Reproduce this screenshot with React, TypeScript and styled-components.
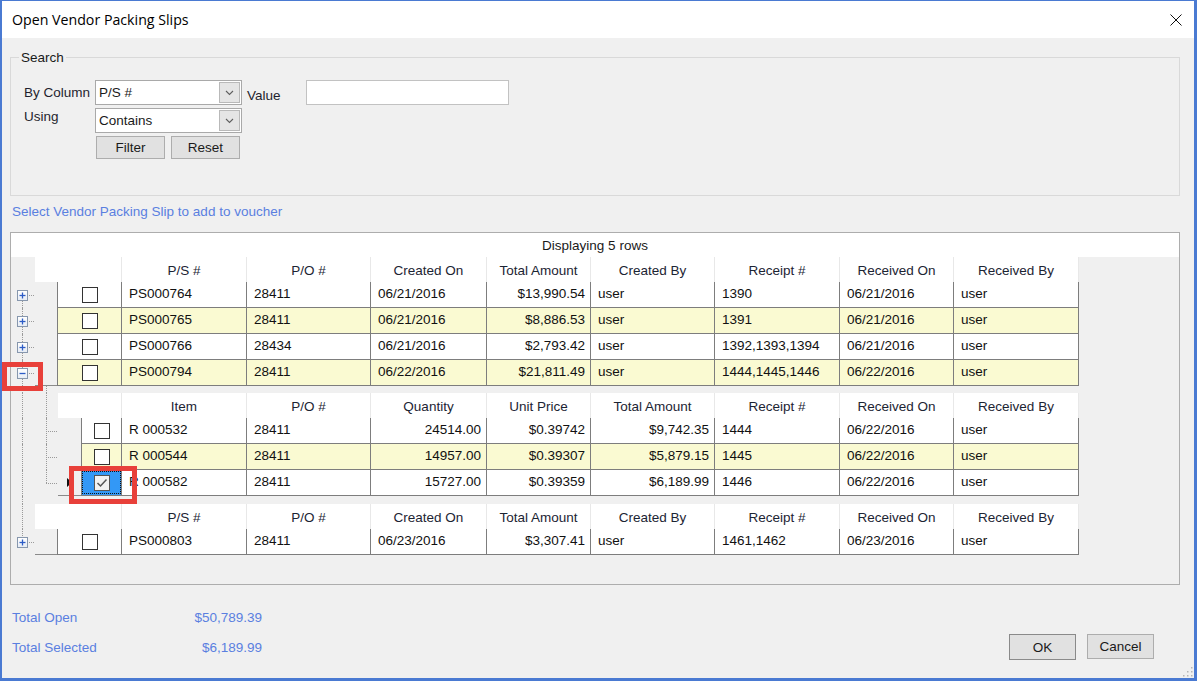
import React from 'react';
import styled, { createGlobalStyle } from 'styled-components';

const GlobalStyle = createGlobalStyle`
  html, body {
    margin: 0;
    padding: 0;
    background: #fff;
  }
  body {
    font-family: "Liberation Sans", Arial, sans-serif;
    font-size: 13.5px;
    color: #1a1a1a;
  }
  * {
    box-sizing: border-box;
  }
`;

const Window = styled.div`
  position: relative;
  width: 1197px;
  height: 681px;
  border-style: solid;
  border-color: #4a7ad2;
  border-width: 1px 3px 3px 2px;
  background: #f0f0f0;
  display: flex;
  flex-direction: column;
`;

const TitleBar = styled.div`
  height: 37px;
  flex-shrink: 0;
  background: #fff;
  display: flex;
  align-items: center;
  justify-content: space-between;
  padding: 0 12px 0 10px;
`;

const Title = styled.span`
  font-family: "Open Sans", "Noto Sans", sans-serif;
  font-size: 14.2px;
  color: #000;
`;

const Body = styled.div`
  display: flex;
  flex-direction: column;
  padding: 12px 0 0 8px;
  flex: 1;
`;

const SearchGroup = styled.fieldset`
  width: 1170px;
  margin: 0;
  min-width: 0;
  padding: 15px 0 36px 13px;
  border: 1px solid #d9d9d9;
`;

const Legend = styled.legend`
  padding: 0 2px;
  margin-left: -5px;
  line-height: 15px;
  color: #1a1a1a;
`;

const SearchForm = styled.div`
  display: grid;
  grid-template-columns: 71px 147px 64px 203px;
  row-gap: 3px;
  align-items: center;
`;

const FieldLabel = styled.span<{ $top?: boolean }>`
  line-height: 15px;
  color: #1f1f2e;
  white-space: nowrap;
  align-self: ${({ $top }) => ($top ? 'start' : 'center')};
  margin-top: ${({ $top }) => ($top ? '1px' : '0')};
`;

const ValueLabel = styled(FieldLabel)`
  padding-left: 5px;
  margin-top: 5px;
`;

const Combo = styled.div`
  height: 25px;
  background: #fff;
  border: 1px solid #a9a9a9;
  display: flex;
  align-items: center;
  justify-content: space-between;
  padding: 0 1px 0 3px;
`;

const ComboArrow = styled.span`
  width: 21px;
  height: 21px;
  background: #e5e5e5;
  border: 1px solid #b9b9b9;
  display: flex;
  align-items: center;
  justify-content: center;
`;

const TextBox = styled.div`
  height: 25px;
  background: #fff;
  border: 1px solid #c2c2c2;
`;

const ButtonRow = styled.div`
  grid-column: 2 / span 3;
  display: flex;
  gap: 6px;
  padding-left: 1px;
`;

const Button = styled.button<{ $w: number; $h: number; $default?: boolean }>`
  width: ${({ $w }) => $w}px;
  height: ${({ $h }) => $h}px;
  background: #e1e1e1;
  border: 1px solid ${({ $default }) => ($default ? '#8a8a8a' : '#adadad')};
  font-family: "Liberation Sans", Arial, sans-serif;
  font-size: 13.5px;
  color: #1a1a1a;
  padding: 0;
`;

const Hint = styled.div`
  line-height: 15px;
  margin: 8px 0 13px 2px;
  color: #5a7fe0;
`;

const Grid = styled.div`
  width: 1170px;
  height: 353px;
  border: 1px solid #adadad;
  background: #f0f0f0;
  display: flex;
  flex-direction: column;
`;

const Caption = styled.div`
  height: 24px;
  flex-shrink: 0;
  background: #fff;
  display: flex;
  align-items: center;
  justify-content: center;
`;

const Line = styled.div<{ $h: number }>`
  display: flex;
  height: ${({ $h }) => $h}px;
  flex-shrink: 0;
`;

type Span = 'none' | 'full' | 'lower' | 'upper';

const TreeCell = styled.div<{ $w: number; $span: Span; $branch?: boolean }>`
  position: relative;
  width: ${({ $w }) => $w}px;
  flex-shrink: 0;
  display: flex;
  align-items: center;
  padding-left: 6px;

  &::before {
    content: '';
    display: ${({ $span }) => ($span === 'none' ? 'none' : 'block')};
    position: absolute;
    left: 11px;
    top: ${({ $span }) => ($span === 'lower' ? '50%' : '0')};
    bottom: ${({ $span }) => ($span === 'upper' ? '50%' : '0')};
    border-left: 1px dotted #9a9a9a;
  }

  &::after {
    content: '';
    display: ${({ $branch }) => ($branch ? 'block' : 'none')};
    position: absolute;
    left: 11px;
    right: 1px;
    top: 50%;
    border-top: 1px dotted #9a9a9a;
  }
`;

const Toggle = styled.span`
  position: relative;
  z-index: 1;
  width: 11px;
  height: 11px;
  border: 1px solid #8797ad;
  background: linear-gradient(#ffffff, #e6ecf5);
  display: flex;
  align-items: center;
  justify-content: center;
`;

const RowSelector = styled.div<{ $w: number; $last?: boolean }>`
  width: ${({ $w }) => $w}px;
  flex-shrink: 0;
  display: flex;
  align-items: center;
  justify-content: center;
  border-bottom: 1px solid ${({ $last }) => ($last ? '#8a8a8a' : 'transparent')};
`;

const HeaderRow = styled.div`
  display: flex;
  background: #fff;
`;

const HeaderSpacer = styled.div<{ $w: number }>`
  width: ${({ $w }) => $w}px;
  flex-shrink: 0;
`;

const HeaderCell = styled.div<{ $w: number }>`
  width: ${({ $w }) => $w}px;
  flex-shrink: 0;
  border-right: 1px solid #e8e8e8;
  display: flex;
  align-items: center;
  justify-content: center;
  padding-top: 1px;
  color: #1c2433;
  white-space: nowrap;
`;

const Cells = styled.div<{ $alt: boolean }>`
  display: flex;
  background: ${({ $alt }) => ($alt ? '#fafad2' : '#fff')};
  border-bottom: 1px solid #7d7d7d;
`;

const Cell = styled.div<{ $w: number; $right?: boolean }>`
  width: ${({ $w }) => $w}px;
  flex-shrink: 0;
  border-right: 1px solid #7d7d7d;
  display: flex;
  align-items: center;
  justify-content: ${({ $right }) => ($right ? 'flex-end' : 'flex-start')};
  padding: 0 5px 3px 7px;
  white-space: nowrap;
  overflow: hidden;
  color: #111;
`;

const CheckCell = styled.div<{ $w: number; $selected?: boolean }>`
  width: ${({ $w }) => $w}px;
  flex-shrink: 0;
  border-left: 1px solid #7d7d7d;
  border-right: 1px solid #7d7d7d;
  display: flex;
  align-items: center;
  justify-content: center;
  background: ${({ $selected }) => ($selected ? '#3398f6' : 'transparent')};
  outline: ${({ $selected }) => ($selected ? '1px dotted #111' : 'none')};
  outline-offset: -2px;
`;

const CheckBox = styled.span<{ $checked?: boolean }>`
  width: 16px;
  height: 16px;
  border: 1px solid ${({ $checked }) => ($checked ? '#555' : '#333')};
  background: ${({ $checked }) => ($checked ? '#f2f2f2' : '#fff')};
  display: flex;
  align-items: center;
  justify-content: center;
`;

const Filler = styled.div`
  flex: 1;
`;

const Footer = styled.div`
  flex: 1;
  display: flex;
  align-items: flex-start;
  justify-content: space-between;
  padding: 18px 40px 0 10px;
`;

const Totals = styled.div`
  display: grid;
  grid-template-columns: 150px 100px;
  color: #5a7fe0;
  line-height: 30px;
`;

const Amount = styled.span`
  justify-self: end;
`;

const Actions = styled.div`
  display: flex;
  gap: 11px;
  margin-top: 31px;
`;

const Highlight = styled.div<{ $x: number; $y: number; $w: number; $h: number }>`
  position: absolute;
  left: ${({ $x }) => $x}px;
  top: ${({ $y }) => $y}px;
  width: ${({ $w }) => $w}px;
  height: ${({ $h }) => $h}px;
  border: 5px solid #e8403a;
  pointer-events: none;
`;

const Grip = styled.svg`
  position: absolute;
  right: 1px;
  bottom: 1px;
`;

type Col = { title: string; width: number; right?: boolean };

const parentCols: Col[] = [
  { title: 'P/S #', width: 125 },
  { title: 'P/O #', width: 124 },
  { title: 'Created On', width: 116 },
  { title: 'Total Amount', width: 104, right: true },
  { title: 'Created By', width: 124 },
  { title: 'Receipt #', width: 125 },
  { title: 'Received On', width: 114 },
  { title: 'Received By', width: 125 },
];

const childCols: Col[] = [
  { title: 'Item', width: 125 },
  { title: 'P/O #', width: 124 },
  { title: 'Quantity', width: 116, right: true },
  { title: 'Unit Price', width: 104, right: true },
  { title: 'Total Amount', width: 124, right: true },
  { title: 'Receipt #', width: 125 },
  { title: 'Received On', width: 114 },
  { title: 'Received By', width: 125 },
];

const parentRows = [
  ['PS000764', '28411', '06/21/2016', '$13,990.54', 'user', '1390', '06/21/2016', 'user'],
  ['PS000765', '28411', '06/21/2016', '$8,886.53', 'user', '1391', '06/21/2016', 'user'],
  ['PS000766', '28434', '06/21/2016', '$2,793.42', 'user', '1392,1393,1394', '06/21/2016', 'user'],
  ['PS000794', '28411', '06/22/2016', '$21,811.49', 'user', '1444,1445,1446', '06/22/2016', 'user'],
];

const childRows = [
  ['R 000532', '28411', '24514.00', '$0.39742', '$9,742.35', '1444', '06/22/2016', 'user'],
  ['R 000544', '28411', '14957.00', '$0.39307', '$5,879.15', '1445', '06/22/2016', 'user'],
  ['R 000582', '28411', '15727.00', '$0.39359', '$6,189.99', '1446', '06/22/2016', 'user'],
];

const lastRow = ['PS000803', '28411', '06/23/2016', '$3,307.41', 'user', '1461,1462', '06/23/2016', 'user'];

const Chevron = () => (
  <svg width="9" height="6" viewBox="0 0 9 6">
    <path d="M1 1 L4.5 4.5 L8 1" fill="none" stroke="#5f5f5f" strokeWidth="1.1" />
  </svg>
);

const ToggleIcon = ({ open }: { open: boolean }) => (
  <Toggle>
    <svg width="9" height="9" viewBox="0 0 9 9">
      <path d="M1.5 4.5 H7.5" stroke="#2d5cc6" strokeWidth="1.3" />
      {!open && <path d="M4.5 1.5 V7.5" stroke="#2d5cc6" strokeWidth="1.3" />}
    </svg>
  </Toggle>
);

const CheckMark = () => (
  <svg width="12" height="10" viewBox="0 0 12 10">
    <path d="M1.5 5 L4.5 8 L10.5 1.5" fill="none" stroke="#555" strokeWidth="1.5" />
  </svg>
);

const Arrow = () => (
  <svg width="5" height="9" viewBox="0 0 5 9">
    <path d="M0 0 L5 4.5 L0 9 Z" fill="#111" />
  </svg>
);

const Header: React.FC<{ cols: Col[]; selW: number; checkW: number }> = ({ cols, selW, checkW }) => (
  <HeaderRow>
    <HeaderSpacer $w={selW} />
    <HeaderCell $w={checkW} />
    {cols.map((c) => (
      <HeaderCell key={c.title} $w={c.width}>
        {c.title}
      </HeaderCell>
    ))}
  </HeaderRow>
);

const DataCells: React.FC<{
  cols: Col[];
  values: string[];
  alt: boolean;
  checkW: number;
  checked?: boolean;
}> = ({ cols, values, alt, checkW, checked }) => (
  <Cells $alt={alt}>
    <CheckCell $w={checkW} $selected={checked}>
      <CheckBox $checked={checked}>{checked && <CheckMark />}</CheckBox>
    </CheckCell>
    {cols.map((c, i) => (
      <Cell key={c.title} $w={c.width} $right={c.right}>
        {values[i]}
      </Cell>
    ))}
  </Cells>
);

export default function App() {
  return (
    <>
      <GlobalStyle />
      <Window>
        <TitleBar>
          <Title>Open Vendor Packing Slips</Title>
          <svg width="12" height="12" viewBox="0 0 12 12">
            <path d="M0.5 0.5 L11.5 11.5 M11.5 0.5 L0.5 11.5" stroke="#111" strokeWidth="1" />
          </svg>
        </TitleBar>

        <Body>
          <SearchGroup>
            <Legend>Search</Legend>
            <SearchForm>
              <FieldLabel>By Column</FieldLabel>
              <Combo>
                P/S #
                <ComboArrow>
                  <Chevron />
                </ComboArrow>
              </Combo>
              <ValueLabel>Value</ValueLabel>
              <TextBox />

              <FieldLabel $top>Using</FieldLabel>
              <Combo>
                Contains
                <ComboArrow>
                  <Chevron />
                </ComboArrow>
              </Combo>
              <span />
              <span />

              <span />
              <ButtonRow>
                <Button $w={69} $h={23}>Filter</Button>
                <Button $w={69} $h={23}>Reset</Button>
              </ButtonRow>
            </SearchForm>
          </SearchGroup>

          <Hint>Select Vendor Packing Slip to add to voucher</Hint>

          <Grid>
            <Caption>Displaying 5 rows</Caption>

            <Line $h={25}>
              <TreeCell $w={24} $span="none" />
              <Header cols={parentCols} selW={22} checkW={65} />
            </Line>
            {parentRows.map((r, i) => (
              <Line key={r[0]} $h={26}>
                <TreeCell $w={24} $span={i === 0 ? 'lower' : 'full'} $branch>
                  <ToggleIcon open={i === 3} />
                </TreeCell>
                <RowSelector $w={22} $last={i === 3} />
                <DataCells cols={parentCols} values={r} alt={i % 2 === 1} checkW={65} />
              </Line>
            ))}

            <Line $h={7}>
              <TreeCell $w={24} $span="full" />
              <TreeCell $w={23} $span="full" />
            </Line>
            <Line $h={25}>
              <TreeCell $w={24} $span="full" />
              <TreeCell $w={23} $span="full" />
              <Header cols={childCols} selW={23} checkW={41} />
            </Line>
            {childRows.map((r, i) => (
              <Line key={r[0]} $h={26}>
                <TreeCell $w={24} $span="full" />
                <TreeCell $w={23} $span={i === 2 ? 'upper' : 'full'} $branch />
                <RowSelector $w={23} $last={i === 2}>
                  {i === 2 && <Arrow />}
                </RowSelector>
                <DataCells cols={childCols} values={r} alt={i === 1} checkW={41} checked={i === 2} />
              </Line>
            ))}

            <Line $h={8}>
              <TreeCell $w={24} $span="full" />
            </Line>
            <Line $h={25}>
              <TreeCell $w={24} $span="full" />
              <Header cols={parentCols} selW={22} checkW={65} />
            </Line>
            <Line $h={26}>
              <TreeCell $w={24} $span="upper" $branch>
                <ToggleIcon open={false} />
              </TreeCell>
              <RowSelector $w={22} $last />
              <DataCells cols={parentCols} values={lastRow} alt={false} checkW={65} />
            </Line>
            <Filler />
          </Grid>
        </Body>

        <Footer>
          <Totals>
            <span>Total Open</span>
            <Amount>$50,789.39</Amount>
            <span>Total Selected</span>
            <Amount>$6,189.99</Amount>
          </Totals>
          <Actions>
            <Button $w={67} $h={26} $default>OK</Button>
            <Button $w={67} $h={25}>Cancel</Button>
          </Actions>
        </Footer>

        <Highlight $x={0} $y={361} $w={41} $h={29} />
        <Highlight $x={67} $y={465} $w={68} $h={38} />

        <Grip width="11" height="11" viewBox="0 0 11 11">
          {[
            [9, 1], [9, 5], [5, 5], [9, 9], [5, 9], [1, 9],
          ].map(([x, y]) => (
            <rect key={`${x}-${y}`} x={x} y={y} width="1.5" height="1.5" fill="#b5b5b5" />
          ))}
        </Grip>
      </Window>
    </>
  );
}
